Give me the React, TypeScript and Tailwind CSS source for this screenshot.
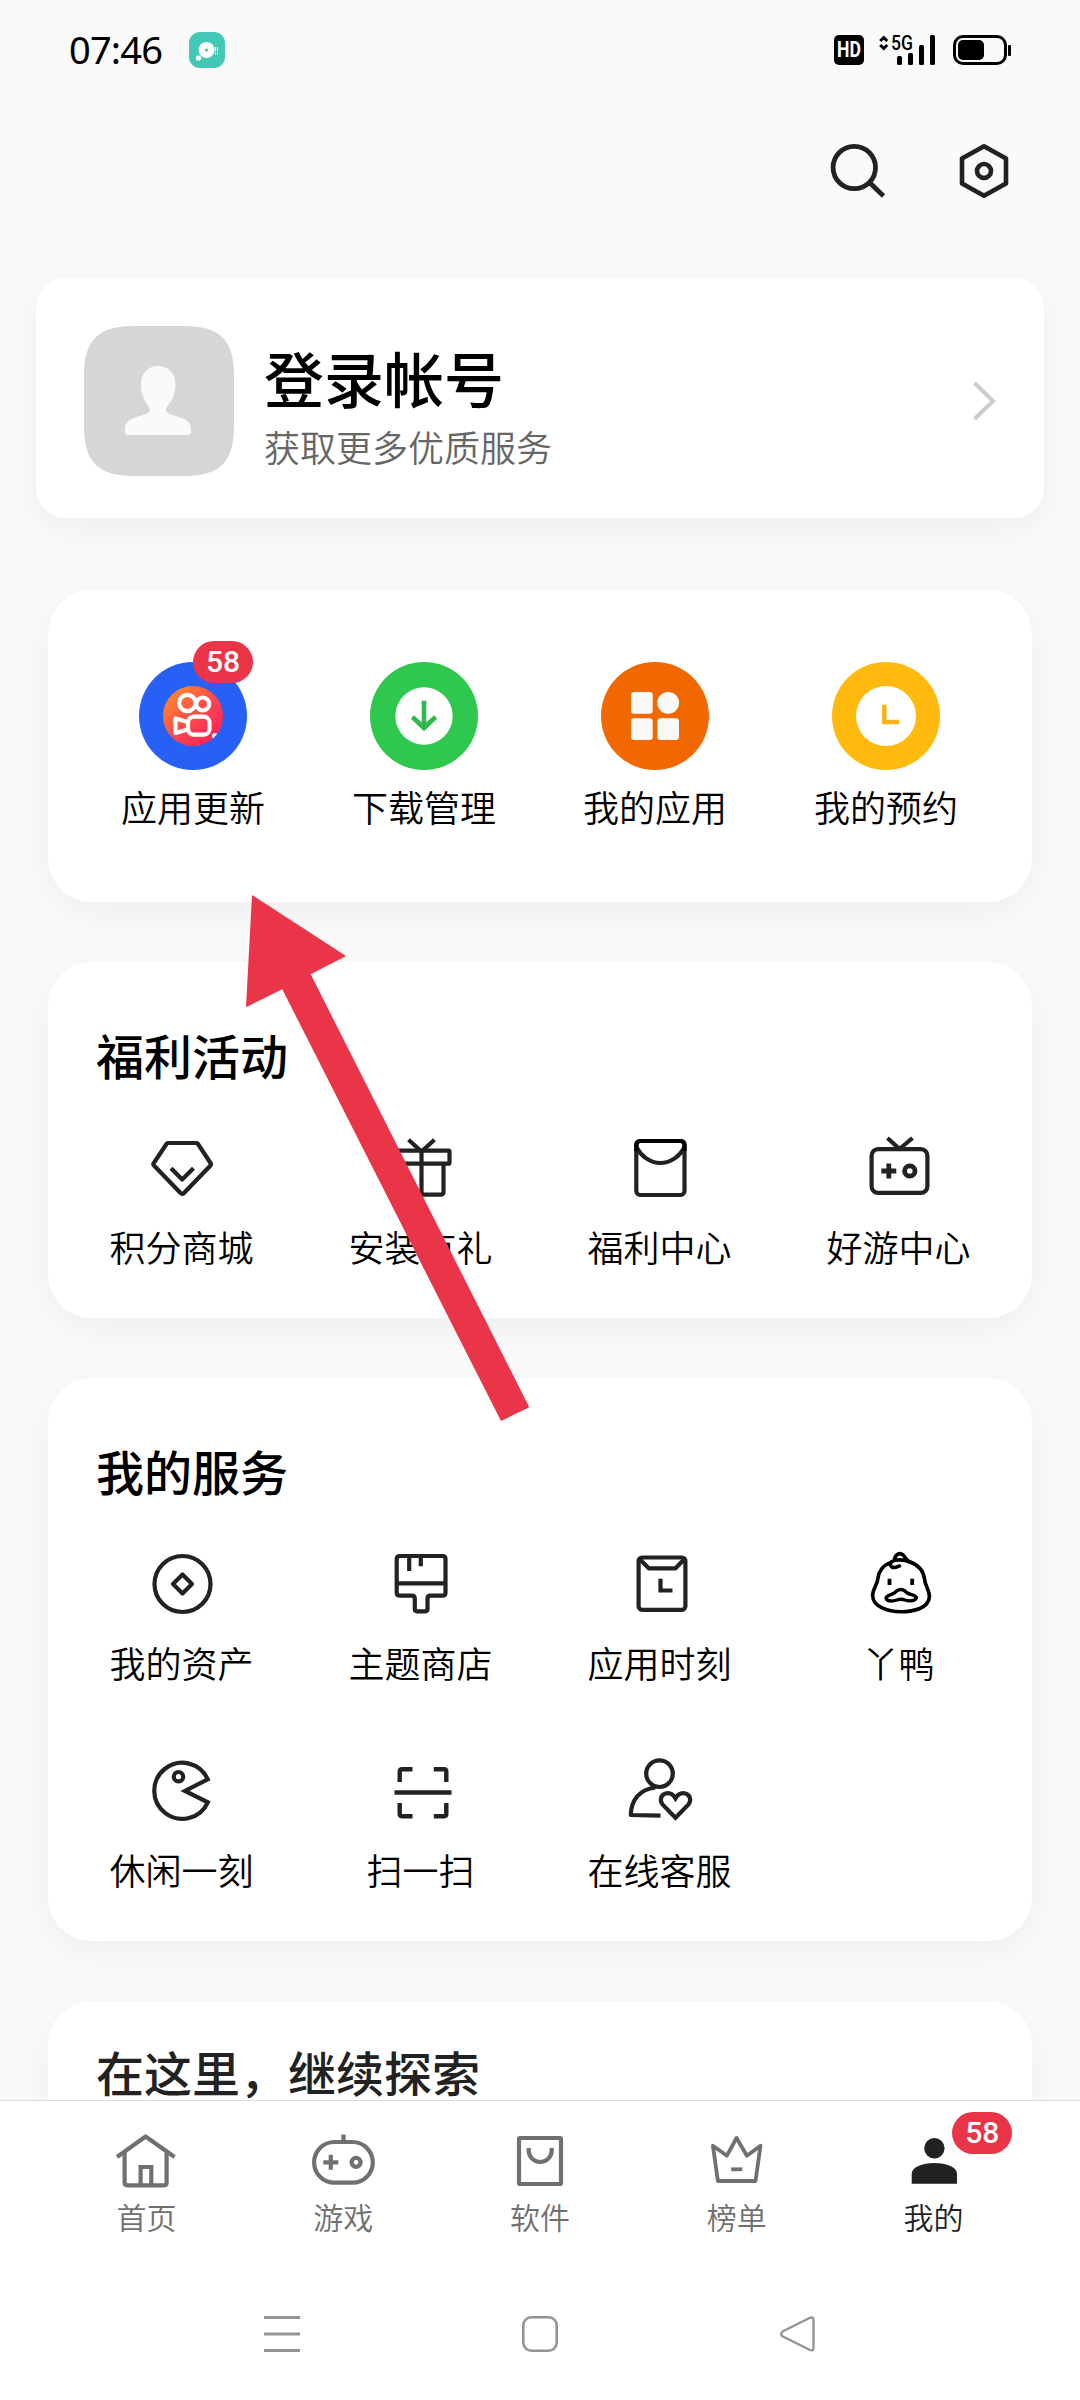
import type { ReactNode } from "react";

type IconProps = {
  children: ReactNode;
  className?: string;
};

function LineIcon({ children, className = "" }: IconProps) {
  return (
    <svg
      viewBox="0 0 72 72"
      className={`w-[72px] h-[72px] shrink-0 ${className}`}
      fill="none"
      stroke="currentColor"
      strokeWidth="4.2"
      strokeLinejoin="round"
    >
      {children}
    </svg>
  );
}

function StatusBar() {
  return (
    <div className="flex h-[100px] shrink-0 items-center justify-between pl-[69px] pr-[69px]">
      <div className="flex items-center gap-[26px]">
        <span className="w-[94px] pb-[3px] font-['Noto_Sans'] text-[38px] leading-[40px] tracking-[-0.8px] text-black">
          07:46
        </span>
        <svg viewBox="0 0 36 36" className="h-9 w-9">
          <rect width="36" height="36" rx="11" fill="#42c8b7" />
          <circle cx="17.5" cy="18" r="8" fill="#fff" />
          <circle cx="17.5" cy="18" r="1.6" fill="#42c8b7" />
          <circle cx="9.5" cy="26" r="2.6" fill="#fff" />
          <path
            d="M26.5 15v4M28.5 15v4M26.5 20.5v2M28.5 20.5v2"
            stroke="#fff"
            strokeWidth="1"
          />
        </svg>
      </div>

      <div className="flex items-center">
        <span className="flex h-[30px] w-[30px] items-center justify-center rounded-[5px] bg-black font-[Roboto] text-[22px] font-bold leading-none text-white">
          <span className="scale-x-[0.8]">HD</span>
        </span>
        <svg
          viewBox="0 0 56 30"
          className="ml-[15px] h-[30px] w-[56px] overflow-visible"
        >
          <path
            d="M1.2 6L4.7 2.5L8.2 6M1.2 10L4.7 13.5L8.2 10"
            fill="none"
            stroke="#000"
            strokeWidth="3"
          />
          <text
            x="12"
            y="14.7"
            fontSize="20.5"
            fontWeight="500"
            textLength="22"
            lengthAdjust="spacingAndGlyphs"
            fontFamily="Roboto, sans-serif"
          >
            5G
          </text>
          <rect x="18" y="21" width="5" height="9" rx="1.5" />
          <rect x="29" y="18" width="5" height="12" rx="1.5" />
          <rect x="40" y="10" width="5" height="20" rx="1.5" />
          <rect x="51" y="0" width="5" height="30" rx="1.5" />
        </svg>
        <svg viewBox="0 0 58 30" className="ml-[18px] h-[30px] w-[58px]">
          <rect
            x="1.5"
            y="1.5"
            width="51"
            height="27"
            rx="8.5"
            fill="none"
            stroke="#000"
            strokeWidth="3"
          />
          <rect x="5" y="5" width="26" height="20" rx="5" />
          <rect x="55" y="10" width="3" height="11" rx="1" />
        </svg>
      </div>
    </div>
  );
}

function Toolbar() {
  return (
    <div className="flex h-[178px] shrink-0 justify-end gap-[58px] pr-[60px] pt-[35px] text-[#222]">
      <LineIcon>
        <circle cx="36.3" cy="32.5" r="21.2" strokeWidth="4.8" />
        <path d="M51.5 47.5L65.5 61" strokeWidth="4.8" />
      </LineIcon>
      <LineIcon>
        <path
          d="M36 11.3L58 23.5V48.5L36 60.7L14 48.5V23.5Z"
          strokeWidth="4.6"
        />
        <circle cx="36" cy="36" r="7" strokeWidth="4.6" />
      </LineIcon>
    </div>
  );
}

function LoginCard() {
  return (
    <section className="mx-9 flex h-[240px] shrink-0 items-center rounded-[30px] bg-white pl-12 pr-12 pt-[6px] shadow-[0_10px_36px_rgba(0,0,0,0.05)]">
      <svg viewBox="0 0 150 150" className="h-[150px] w-[150px]">
        <path
          d="M0 50C0 14 14 0 50 0H100C136 0 150 14 150 50V100C150 136 136 150 100 150H50C14 150 0 136 0 100Z"
          fill="#d6d6d6"
        />
        <path
          d="M74 40C84 40 91.5 47 91.5 58C91.5 69 87.5 75 83.5 80C80 85 83 87 87 88.5C98 92 107 94 107 102V106Q107 109 104 109H44Q41 109 41 106V102C41 94 50 92 60 88.5C65 87 67.5 85 64.5 80C60.5 75 57 69 57 58C57 47 64.5 40 74 40Z"
          fill="#fafafa"
        />
      </svg>
      <div className="ml-[30px] flex flex-1 flex-col pt-[18px]">
        <h1 className="text-[60px] font-medium leading-[72px] text-black">
          登录帐号
        </h1>
        <p className="text-[36px] font-[350] leading-[67px] text-[#666]">
          获取更多优质服务
        </p>
      </div>
      <svg viewBox="0 0 24 44" className="h-11 w-6">
        <path d="M2.5 4L21 22L2.5 40" fill="none" stroke="#ccc" strokeWidth="4" />
      </svg>
    </section>
  );
}

function Badge({ children, className = "" }: IconProps) {
  return (
    <span
      className={`absolute flex h-[42px] w-[60px] items-center justify-center rounded-full bg-[#ea3447] font-[Roboto] text-[30px] font-medium leading-none text-white ${className}`}
    >
      {children}
    </span>
  );
}

type ShortcutProps = {
  color: string;
  label: string;
  badge?: string;
  children: ReactNode;
};

function Shortcut({ color, label, badge, children }: ShortcutProps) {
  return (
    <div className="flex flex-col items-center">
      <div className="relative h-[108px] w-[108px]">
        <svg viewBox="0 0 108 108" className="h-[108px] w-[108px]">
          <circle cx="54" cy="54" r="54" fill={color} />
          {children}
        </svg>
        {badge && <Badge className="left-[54px] top-[-21px]">{badge}</Badge>}
      </div>
      <span className="mt-[12px] text-[36px] font-[350] leading-[48px] text-black">
        {label}
      </span>
    </div>
  );
}

function ShortcutCard() {
  return (
    <section className="mx-12 mt-[72px] grid h-[312px] shrink-0 grid-cols-4 rounded-[44px] bg-white pl-[29.5px] pr-[30.5px] pt-[72px] shadow-[0_10px_36px_rgba(0,0,0,0.05)]">
      <Shortcut color="#2660f5" label="应用更新" badge="58">
        <defs>
          <linearGradient id="video" x1="0" y1="0" x2="1" y2="1">
            <stop offset="0.1" stopColor="#ff8a2b" />
            <stop offset="0.5" stopColor="#ff4b4b" />
            <stop offset="0.85" stopColor="#fc2459" />
          </linearGradient>
          <clipPath id="disc">
            <circle cx="54" cy="54" r="30" />
          </clipPath>
        </defs>
        <circle cx="54" cy="54" r="30" fill="url(#video)" />
        <g fill="none" stroke="#fff" strokeWidth="4.2" clipPath="url(#disc)">
          <circle cx="48.3" cy="41" r="8.2" />
          <circle cx="63.7" cy="42" r="6.5" />
          <rect x="49" y="54.7" width="21.5" height="18" rx="6" />
          <path
            d="M48.5 60L36.5 56.5V71L48.5 67.5"
            strokeLinejoin="round"
          />
          <circle cx="76" cy="74" r="3" fill="#fff" stroke="none" />
        </g>
      </Shortcut>
      <Shortcut color="#2fc84f" label="下载管理">
        <circle cx="54" cy="54" r="28.7" fill="#fff" />
        <path
          d="M54 38.7V65.5M42.5 55L54 66L65.5 55"
          fill="none"
          stroke="#2fb84d"
          strokeWidth="4.6"
        />
      </Shortcut>
      <Shortcut color="#f16700" label="我的应用">
        <g fill="#fafafa">
          <rect x="30" y="30" width="21.7" height="21.7" rx="3" />
          <circle cx="67.2" cy="40.8" r="10.9" />
          <rect x="30" y="56.3" width="21.7" height="21.7" rx="3" />
          <rect x="56.3" y="56.3" width="21.7" height="21.7" rx="3" />
        </g>
      </Shortcut>
      <Shortcut color="#ffba0d" label="我的预约">
        <circle cx="54" cy="54" r="30" fill="#fff" />
        <path
          d="M52.3 42.7V60H67"
          fill="none"
          stroke="#f9b416"
          strokeWidth="4.6"
        />
      </Shortcut>
    </section>
  );
}

type Item = {
  label: string;
  icon: ReactNode;
};

const benefits: Item[] = [
  {
    label: "积分商城",
    icon: (
      <LineIcon>
        <path d="M22 11H50.5Q51.5 11 52 12L64.5 31Q65.5 32.3 64.5 33.5L38 61Q36.2 63 34.5 61L8 33.5Q6.8 32.3 7.8 31L20.5 12Q21 11 22 11Z" />
        <path d="M25 36.3L36.2 47.5L47.5 36.3" />
      </LineIcon>
    ),
  },
  {
    label: "安装有礼",
    icon: (
      <LineIcon>
        <rect x="8.5" y="18.7" width="56" height="13" rx="1" />
        <path d="M14.5 31.7V59.7Q14.5 62.7 17.5 62.7H55.5Q58.5 62.7 58.5 59.7V31.7" />
        <path d="M36.5 19V62M23.5 7.7L36.5 19.5L49.5 7.7" />
      </LineIcon>
    ),
  },
  {
    label: "福利中心",
    icon: (
      <LineIcon>
        <rect x="12.3" y="9" width="48.2" height="54" rx="4" />
        <path d="M12.3 15C17 24 26 31 36.4 31S56 24 60.5 15" />
        <path
          d="M12.3 19V13Q12.3 9 16.3 9H56.5Q60.5 9 60.5 13V19"
          stroke="#000"
        />
      </LineIcon>
    ),
  },
  {
    label: "好游中心",
    icon: (
      <LineIcon>
        <rect x="8.6" y="17.2" width="55.8" height="43.6" rx="6.5" />
        <path d="M24.5 6L36.5 17L49.5 6" />
        <path d="M18.3 39H33.3M25.8 31.5V46.5" strokeWidth="4.8" />
        <circle cx="46.8" cy="39" r="5.2" strokeWidth="4.8" />
      </LineIcon>
    ),
  },
];

const services: Item[] = [
  {
    label: "我的资产",
    icon: (
      <LineIcon>
        <circle cx="36.5" cy="36" r="28" />
        <path d="M36.5 26.5L46 36L36.5 45.5L27 36Z" />
      </LineIcon>
    ),
  },
  {
    label: "主题商店",
    icon: (
      <LineIcon>
        <path d="M15 8H57.5Q60.5 8 60.5 11V44.7Q60.5 47.7 57.5 47.7H45.5Q42.5 47.7 42.5 50.7V61Q42.5 63.3 40.2 63.3H32Q29.8 63.3 29.8 61V50.7Q29.8 47.7 26.8 47.7H15Q11.7 47.7 11.7 44.7V11Q11.7 8 15 8Z" />
        <path d="M11.7 35.3H60.5M24.2 8V23M35.8 8V18.3" />
      </LineIcon>
    ),
  },
  {
    label: "应用时刻",
    icon: (
      <LineIcon>
        <rect x="14.6" y="9.5" width="46.8" height="52.3" rx="3.5" />
        <path d="M16 11.5L24.8 20.3H51.5L60 11.5" />
        <path d="M36.5 30.7V42.5H48.5" strokeLinejoin="miter" />
      </LineIcon>
    ),
  },
  {
    label: "丫鸭",
    icon: (
      <LineIcon className="text-black">
        <g strokeWidth="3.6" strokeLinecap="round">
          <path d="M47 14C55.5 17 60.5 23 61.5 31C62 38 66.7 42 66.4 49C65.5 60 51 63.7 38 63.7S10 59 9.6 47.5C9.6 41 14.5 37 15 30C15.5 24 20 17 28 14.5" />
          <path d="M31.5 11C33 5.5 37 4.5 40 7C42 8.5 42.5 12 47 14C41 11.5 33 11 29 13.5C25.5 16 28 19.5 31 19.5C34 19.5 35 18 36.5 18" />
          <path
            d="M23 50C24 46.5 29 47 32 44.5C35.5 40.5 40 40.5 43.5 44.5C47 47 52 46.5 53.5 49.5C52 54 45 53 42 52C39 50.8 37 50.8 34 52C30 53.3 24 54 23 50Z"
            strokeWidth="3.4"
          />
        </g>
        <path d="M26.5 30.7V37M49.2 30.7V37" strokeWidth="3.8" />
      </LineIcon>
    ),
  },
  {
    label: "休闲一刻",
    icon: (
      <LineIcon>
        <path
          d="M61.8 24.3A28 28 0 1 0 61.8 47.3L39 36Z"
          strokeLinejoin="miter"
        />
        <circle cx="32.5" cy="21.7" r="4.7" />
      </LineIcon>
    ),
  },
  {
    label: "扫一扫",
    icon: (
      <LineIcon>
        <g strokeWidth="4.4">
          <path d="M27.5 14.2H17Q14.7 14.2 14.7 16.5V27M48.8 14.2H59Q61.3 14.2 61.3 16.5V27" />
          <path d="M27.5 61.2H17Q14.7 61.2 14.7 59V48M48.8 61.2H59Q61.3 61.2 61.3 59V48" />
          <path d="M9.5 37.5H66.5" />
        </g>
      </LineIcon>
    ),
  },
  {
    label: "在线客服",
    icon: (
      <LineIcon>
        <circle cx="35.5" cy="18.7" r="13.3" />
        <path d="M31.5 32.5C16 34 7 45 6.8 60L36.5 60.7" />
        <path
          d="M51.5 62.7L38.7 49.6C35.5 46 36.5 40 41.5 38.5C46 37.3 49.5 40 51.5 43.3C53.5 40 57 37.3 61.5 38.5C66.5 40 67.5 46 64.3 49.6Z"
          strokeLinejoin="miter"
        />
      </LineIcon>
    ),
  },
];

type ItemCardProps = {
  title: string;
  items: Item[];
};

function ItemCard({ title, items }: ItemCardProps) {
  return (
    <section className="mx-12 mt-[60px] shrink-0 rounded-[44px] bg-white pb-[57px] shadow-[0_10px_36px_rgba(0,0,0,0.05)]">
      <h2 className="pl-12 pt-[57px] text-[48px] font-medium leading-[70px] text-black">
        {title}
      </h2>
      <div className="mt-[43px] grid grid-cols-4 gap-y-[78px] px-[14px]">
        {items.map((item) => (
          <div
            key={item.label}
            className="flex h-[129px] flex-col items-center text-[#222]"
          >
            {item.icon}
            <span className="mt-[18px] text-[36px] font-[350] leading-[48px] text-black">
              {item.label}
            </span>
          </div>
        ))}
      </div>
    </section>
  );
}

const tabs: Item[] = [
  {
    label: "首页",
    icon: (
      <LineIcon>
        <path d="M7 33L35.6 12.5L64.5 33" />
        <path d="M14.6 28V58.5Q14.6 61.3 17.5 61.3H54Q56.6 61.3 56.6 58.5V28" />
        <path d="M30.6 61V43H41.3V61" strokeLinejoin="miter" />
      </LineIcon>
    ),
  },
  {
    label: "游戏",
    icon: (
      <LineIcon>
        <rect x="7.1" y="18" width="58.7" height="40.7" rx="20.3" />
        <path d="M36.5 10.5V18M16.3 38.3H31.3M23.8 30.8V45.8" />
        <circle cx="49.1" cy="38.3" r="4.5" />
      </LineIcon>
    ),
  },
  {
    label: "软件",
    icon: (
      <LineIcon>
        <rect x="15" y="14" width="42" height="46" rx="1" />
        <path d="M24.7 24V26.5A11.5 11.5 0 0 0 47.7 26.5V24" />
      </LineIcon>
    ),
  },
  {
    label: "榜单",
    icon: (
      <LineIcon>
        <path
          d="M11.9 21.7L25.9 31.7L35.5 14L45.9 31.7L59.5 21.7L54.5 57H16.9Z"
          strokeWidth="3.8"
        />
        <path d="M30.2 45.3H41.2" strokeWidth="3.8" />
      </LineIcon>
    ),
  },
  {
    label: "我的",
    icon: (
      <LineIcon>
        <g fill="currentColor" stroke="none">
          <circle cx="36.4" cy="24.3" r="10.2" />
          <path d="M13.7 59.7V50C13.7 43 24 39 36.4 39S59 43 59 50V59.7Z" />
        </g>
      </LineIcon>
    ),
  },
];

function TabBar({ active }: { active: string }) {
  return (
    <nav className="grid h-[180px] shrink-0 grid-cols-5 border-t border-[#dedede] bg-white px-12 pt-[23px]">
      {tabs.map((tab) => (
        <div
          key={tab.label}
          className={`relative flex flex-col items-center ${
            tab.label === active ? "text-[#222]" : "text-[#707070]"
          }`}
        >
          {tab.icon}
          <span className="text-[30px] font-[350] leading-[40px]">
            {tab.label}
          </span>
          {tab.label === active && (
            <Badge className="left-[117px] top-[-12px]">58</Badge>
          )}
        </div>
      ))}
    </nav>
  );
}

function SystemBar() {
  return (
    <div className="flex h-[120px] shrink-0 justify-center gap-[222px] bg-white pt-[36px] text-[#949494]">
      <svg viewBox="0 0 36 36" className="h-9 w-9">
        <path
          d="M0 1.5H36M0 18H36M0 34.5H36"
          stroke="currentColor"
          strokeWidth="3"
        />
      </svg>
      <svg viewBox="0 0 36 36" className="h-9 w-9">
        <rect
          x="1.3"
          y="1.3"
          width="33.4"
          height="33.4"
          rx="8"
          fill="none"
          stroke="currentColor"
          strokeWidth="2.6"
        />
      </svg>
      <svg viewBox="0 0 36 36" className="h-9 w-9">
        <path
          d="M2.5 15.5L30 1.8Q33.5 0.5 33.5 4V32Q33.5 35.3 30 34L2.5 20.3Q0 18 2.5 15.5Z"
          fill="none"
          stroke="currentColor"
          strokeWidth="2.4"
        />
      </svg>
    </div>
  );
}

export default function App() {
  return (
    <div className="relative flex h-[2400px] w-[1080px] flex-col overflow-hidden bg-[#fafafa] font-['Noto_Sans_CJK_SC',sans-serif]">
      <StatusBar />
      <main className="flex min-h-0 flex-1 flex-col overflow-hidden">
        <Toolbar />
        <LoginCard />
        <ShortcutCard />
        <ItemCard title="福利活动" items={benefits} />
        <ItemCard title="我的服务" items={services} />
        <section className="mx-12 mt-[60px] h-[300px] shrink-0 rounded-[44px] bg-white pl-12 pt-[44px] shadow-[0_10px_36px_rgba(0,0,0,0.05)]">
          <h2 className="text-[48px] font-medium leading-[52px] text-[#222]">
            在这里，继续探索
          </h2>
        </section>
      </main>
      <TabBar active="我的" />
      <SystemBar />

      {/* pointer towards the app updates shortcut */}
      <svg
        viewBox="0 0 284 527"
        className="pointer-events-none absolute left-[246px] top-[895px] h-[527px] w-[284px]"
      >
        <path
          d="M6 0L100 61L64.7 79.3L283.3 512.3L255 526L36.3 94.3L0 112.3Z"
          fill="#ea3447"
        />
      </svg>
    </div>
  );
}
